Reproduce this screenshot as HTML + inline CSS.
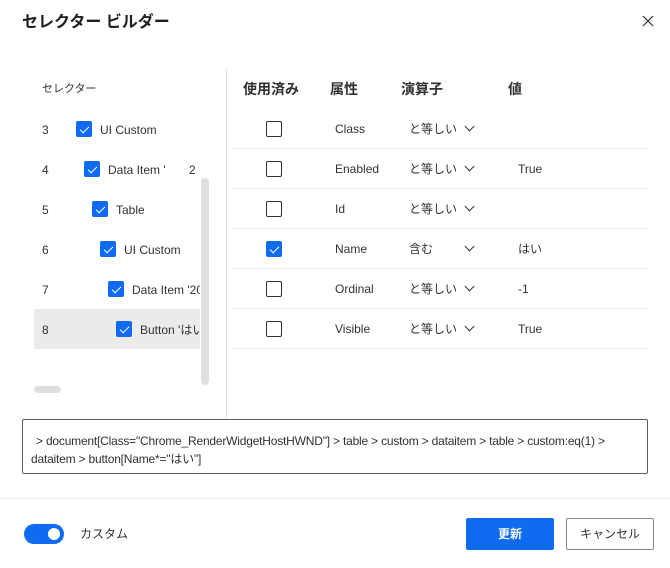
<!DOCTYPE html>
<html><head><meta charset="utf-8"><style>
*{box-sizing:border-box;margin:0;padding:0}
body{width:670px;height:568px;background:#fff;font-family:"Liberation Sans","Noto Sans CJK JP",sans-serif;color:#323130;position:relative;overflow:hidden;font-size:12px}
.a{position:absolute;line-height:16px}
.cb{position:absolute;width:16px;height:16px;border:1px solid #323130;border-radius:2px;background:#fff}
.cb.on{background:#0f6cf0;border-color:#0f6cf0}
.cb.on::after{content:"";position:absolute;left:5px;top:2px;width:4px;height:8px;border:solid #fff;border-width:0 1.3px 1.3px 0;transform:rotate(45deg)}
.sep{position:absolute;left:232px;width:416px;height:1px;background:#edebe9}
.chev{position:absolute;width:7px;height:7px;border:solid #323130;border-width:0 1.2px 1.2px 0;transform:rotate(45deg)}
</style></head><body>
<div class="a" style="left:22px;top:13px;font-size:16px;line-height:20px;font-weight:bold;color:#201f1e">セレクター ビルダー</div>
<svg class="a" style="left:642px;top:15px" width="12" height="12" viewBox="0 0 12 12"><path d="M1 1L11 11M11 1L1 11" stroke="#323130" stroke-width="1.2"/></svg>

<div class="a" style="left:42px;top:81px;font-size:11px">セレクター</div>
<div class="a" style="left:34px;top:309px;width:166px;height:40px;background:#edebe9"></div>
<div class="a" style="left:42px;top:122px">3</div><div class="cb on" style="left:76px;top:121px"></div><div class="a" style="left:100px;top:122px">UI Custom</div>
<div class="a" style="left:42px;top:162px">4</div><div class="cb on" style="left:84px;top:161px"></div><div class="a" style="left:108px;top:162px;white-space:pre">Data Item '       2</div>
<div class="a" style="left:42px;top:202px">5</div><div class="cb on" style="left:92px;top:201px"></div><div class="a" style="left:116px;top:202px">Table</div>
<div class="a" style="left:42px;top:242px">6</div><div class="cb on" style="left:100px;top:241px"></div><div class="a" style="left:124px;top:242px">UI Custom</div>
<div class="a" style="left:42px;top:282px">7</div><div class="cb on" style="left:108px;top:281px"></div><div class="a" style="left:132px;top:282px;width:68px;overflow:hidden;white-space:nowrap">Data Item '20</div>
<div class="a" style="left:42px;top:322px">8</div><div class="cb on" style="left:116px;top:321px"></div><div class="a" style="left:140px;top:322px;width:60px;overflow:hidden;white-space:nowrap">Button 'はい'</div>
<div class="a" style="left:201px;top:178px;width:8px;height:207px;border-radius:4px;background:#e1dfdd"></div>
<div class="a" style="left:34px;top:386px;width:27px;height:7px;border-radius:4px;background:#e1dfdd"></div>
<div class="a" style="left:226px;top:70px;width:1px;height:348px;background:#e1dfdd"></div>

<div class="a" style="left:243px;top:80px;font-size:14px;line-height:18px;font-weight:bold">使用済み</div>
<div class="a" style="left:330px;top:80px;font-size:14px;line-height:18px;font-weight:bold">属性</div>
<div class="a" style="left:401px;top:80px;font-size:14px;line-height:18px;font-weight:bold">演算子</div>
<div class="a" style="left:508px;top:80px;font-size:14px;line-height:18px;font-weight:bold">値</div>

<div class="cb" style="left:266px;top:121px"></div><div class="a" style="left:335px;top:121px">Class</div><div class="a" style="left:409px;top:121px">と等しい</div><div class="chev" style="left:466px;top:123px"></div>
<div class="sep" style="top:148px"></div>
<div class="cb" style="left:266px;top:161px"></div><div class="a" style="left:335px;top:161px">Enabled</div><div class="a" style="left:409px;top:161px">と等しい</div><div class="chev" style="left:466px;top:163px"></div><div class="a" style="left:518px;top:161px">True</div>
<div class="sep" style="top:188px"></div>
<div class="cb" style="left:266px;top:201px"></div><div class="a" style="left:335px;top:201px">Id</div><div class="a" style="left:409px;top:201px">と等しい</div><div class="chev" style="left:466px;top:203px"></div>
<div class="sep" style="top:228px"></div>
<div class="cb on" style="left:266px;top:241px"></div><div class="a" style="left:335px;top:241px">Name</div><div class="a" style="left:409px;top:241px">含む</div><div class="chev" style="left:466px;top:243px"></div><div class="a" style="left:518px;top:241px">はい</div>
<div class="sep" style="top:268px"></div>
<div class="cb" style="left:266px;top:281px"></div><div class="a" style="left:335px;top:281px">Ordinal</div><div class="a" style="left:409px;top:281px">と等しい</div><div class="chev" style="left:466px;top:283px"></div><div class="a" style="left:518px;top:281px">-1</div>
<div class="sep" style="top:308px"></div>
<div class="cb" style="left:266px;top:321px"></div><div class="a" style="left:335px;top:321px">Visible</div><div class="a" style="left:409px;top:321px">と等しい</div><div class="chev" style="left:466px;top:323px"></div><div class="a" style="left:518px;top:321px">True</div>
<div class="sep" style="top:348px"></div>

<div class="a" style="left:22px;top:419px;width:626px;height:55px;border:1px solid #605e5c;border-radius:2px;padding:12px 8px 0 13px;line-height:18px;font-size:12px;letter-spacing:-0.2px"> &gt; document[Class="Chrome_RenderWidgetHostHWND"] &gt; table &gt; custom &gt; dataitem &gt; table &gt; custom:eq(1) &gt;<br><span style="margin-left:-5px">dataitem &gt; button[Name*="はい"]</span></div>
<div class="a" style="left:0;top:498px;width:670px;height:1px;background:#edebe9"></div>

<div class="a" style="left:24px;top:524px;width:40px;height:20px;border-radius:10px;background:#0f6cf0"></div>
<div class="a" style="left:48px;top:528px;width:12px;height:12px;border-radius:6px;background:#fff"></div>
<div class="a" style="left:80px;top:526px;font-size:12px">カスタム</div>
<div class="a" style="left:466px;top:518px;width:88px;height:32px;background:#0f6cf0;border-radius:2px;color:#fff;font-weight:bold;text-align:center;line-height:32px">更新</div>
<div class="a" style="left:566px;top:518px;width:88px;height:32px;border:1px solid #8a8886;border-radius:2px;text-align:center;line-height:30px">キャンセル</div>
</body></html>
